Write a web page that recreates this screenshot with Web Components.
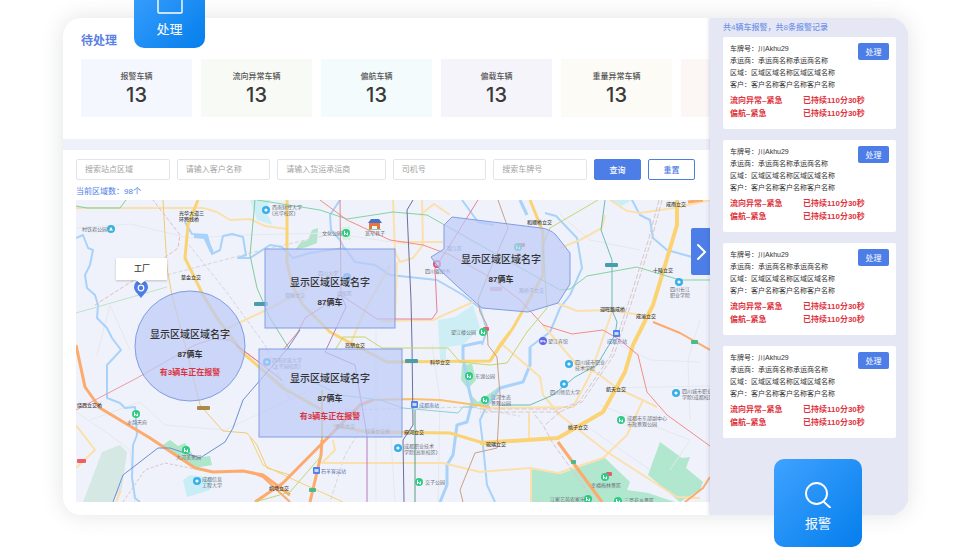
<!DOCTYPE html>
<html lang="zh-CN">
<head>
<meta charset="utf-8">
<title>待处理</title>
<style>
    body {
        margin: 0;
        background: #fff;
        color: #333;
        font-family: "Liberation Sans", "Noto Sans CJK SC", sans-serif;
        --blue: #4d7de6;
        --red: #dd3340;
    }
</style>
</head>
<body>
<dispatch-board>
    <tile-button slot="float" class="top" label="处理">
        <svg viewBox="0 0 26 26" width="26" height="26"><rect x="1" y="1" width="24" height="24" rx="1" fill="none" stroke="#fff" stroke-width="1.4"/></svg>
    </tile-button>
    <tile-button slot="float" class="bottom" label="报警">
        <svg viewBox="0 0 26 26" width="26" height="26"><g fill="none" stroke="#fff" stroke-width="1.9" stroke-linecap="round"><circle cx="11.500" cy="11.500" r="10.500"/><path d="M18.500 19.500L25 25.500"/></g></svg>
    </tile-button>

    <stat-row>
        <stat-card label="报警车辆" value="13" style="--bg: #f5f7fe"></stat-card>
        <stat-card label="流向异常车辆" value="13" style="--bg: #f8fbf5"></stat-card>
        <stat-card label="偏航车辆" value="13" style="--bg: #f3fbfc"></stat-card>
        <stat-card label="偏载车辆" value="13" style="--bg: #f5f4fb"></stat-card>
        <stat-card label="重量异常车辆" value="13" style="--bg: #fcfbf6"></stat-card>
        <stat-card label="" value="" style="--bg: #fcf7f5"></stat-card>
    </stat-row>
    <search-bar></search-bar>
    <region-map></region-map>

    <alarm-list slot="side">
        <alarm-card></alarm-card>
        <alarm-card></alarm-card>
        <alarm-card></alarm-card>
        <alarm-card></alarm-card>
    </alarm-list>
</dispatch-board>

<script>
class DispatchBoard extends HTMLElement {
    constructor() {
        super()

        const shadow = this.attachShadow({ mode: 'open' })

        shadow.innerHTML = `
        <style>
            :host {
                display: block;
                padding: 18px 69px 35px 63px;
                overflow: hidden;
            }

            .frame {
                position: relative;
            }

            .panel {
                display: flex;
                border-radius: 18px;
                background: #fff;
                box-shadow: 0 0 22px rgba(60, 70, 70, .15);
                overflow: hidden;
            }

            main {
                flex: 1;
                min-width: 0;
                padding-bottom: 13px;
            }

            aside {
                position: relative;
                flex: 0 0 198px;
                background: #e5e8f4;
                box-shadow: 0 0 4px rgba(60, 70, 130, .3);
            }

            ::slotted(.top),
            ::slotted(.bottom) {
                position: absolute;
            }

            ::slotted(.top) {
                --size: 71px;
                --pad: 8px;
                left: 71px;
                top: -41px;
            }

            ::slotted(.bottom) {
                --size: 88px;
                --pad: 13px;
                right: 46px;
                bottom: -32px;
            }
        </style>

        <div class="frame">
            <div class="panel">
                <main><slot></slot></main>
                <aside><slot name="side"></slot></aside>
            </div>
            <slot name="float"></slot>
        </div>
        `
    }
}

class TileButton extends HTMLElement {
    constructor() {
        super()

        const shadow = this.attachShadow({ mode: 'open' })

        shadow.innerHTML = `
        <style>
            :host {
                display: block;
            }

            button {
                display: flex;
                flex-direction: column;
                align-items: center;
                justify-content: flex-end;
                gap: 6px;
                width: var(--size);
                height: var(--size);
                box-sizing: border-box;
                padding: 0 0 var(--pad);
                border: 0;
                border-radius: 10px;
                background: linear-gradient(135deg, #3fa2ff, #047eec);
                color: #fff;
                font: 13px/20px "Liberation Sans", "Noto Sans CJK SC", sans-serif;
            }
        </style>

        <button type="button"><slot></slot><span>${this.getAttribute('label')}</span></button>
        `
    }
}

class StatRow extends HTMLElement {
    constructor() {
        super()

        const shadow = this.attachShadow({ mode: 'open' })

        shadow.innerHTML = `
        <style>
            :host {
                display: block;
                padding: 13px 0 22px 18px;
                border-bottom: 11px solid #eef1f9;
                overflow: hidden;
            }

            h1 {
                margin: 0 0 8px;
                font-size: 12px;
                line-height: 20px;
                font-weight: 700;
                color: #5b80e4;
            }

            .cards {
                display: flex;
                gap: 9px;
            }
        </style>

        <h1>待处理</h1>
        <div class="cards"><slot></slot></div>
        `
    }
}

class StatCard extends HTMLElement {
    constructor() {
        super()

        const shadow = this.attachShadow({ mode: 'open' })

        shadow.innerHTML = `
        <style>
            :host {
                display: block;
                flex: 0 0 111px;
                height: 58px;
                box-sizing: border-box;
                padding-top: 12px;
                background: var(--bg);
                text-align: center;
            }

            .label {
                font-size: 8px;
                line-height: 12px;
                font-weight: 500;
                color: #555;
            }

            .value {
                font: 500 20px/24px Inter, sans-serif;
                color: #3a3a3a;
            }
        </style>

        <div class="label">${this.getAttribute('label')}</div>
        <div class="value">${this.getAttribute('value')}</div>
        `
    }
}

class SearchBar extends HTMLElement {
    constructor() {
        super()

        const shadow = this.attachShadow({ mode: 'open' })
        const fields = ['搜索站点区域', '请输入客户名称', '请输入货运承运商', '司机号', '搜索车牌号']

        shadow.innerHTML = `
        <style>
            :host {
                display: block;
                padding: 9px 15px 2px 13px;
            }

            form {
                display: flex;
                gap: 7px;
            }

            input,
            button {
                height: 21px;
                box-sizing: border-box;
                border: 1px solid #e3e5ea;
                border-radius: 2px;
                background: #fff;
                font: 8px "Liberation Sans", "Noto Sans CJK SC", sans-serif;
            }

            input {
                flex: 93 1 0;
                min-width: 0;
                padding: 0 8px;
            }

            input.wide {
                flex-grow: 111;
            }

            input::placeholder {
                color: #a3a3a3;
            }

            button {
                flex: 0 0 47px;
                padding: 0;
                border-color: var(--blue);
                font-weight: 500;
                color: var(--blue);
            }

            button[type=submit] {
                background: var(--blue);
                color: #fff;
            }

            p {
                margin: 5px 0 0;
                font-size: 8px;
                line-height: 13px;
                color: var(--blue);
            }
        </style>

        <form>
            ${fields.map((f, i) => `<input type="text" placeholder="${f}" aria-label="${f}"${i == 2 ? ' class="wide"' : ''}>`).join('')}
            <button type="submit">查询</button>
            <button type="reset">重置</button>
        </form>
        <p>当前区域数：98个</p>
        `
    }
}

// [colour, width, points, dash]
const roads = [
    // side streets
    ['#e5e8ee', 1, '76,228 130,224 190,238 245,235 330,233 413,245'],
    ['#e5e8ee', 1, '97,355 110,305 130,350'],
    ['#e5e8ee', 1, '90,420 140,402 165,425 225,430 310,390'],
    ['#e5e8ee', 1, '340,437 390,425 395,502'],
    ['#e5e8ee', 1, '432,345 440,400 438,502'],
    ['#e5e8ee', 1, '376,330 376,502'],
    ['#e5e8ee', 1, '605,388 710,386'],
    ['#e5e8ee', 1, '585,425 650,470'],
    ['#e5e8ee', 1, '600,405 690,440 670,470'],
    ['#e5e8ee', 1, '700,320 688,360 690,420'],
    ['#e5e8ee', 1, '560,215 590,240 640,250'],
    ['#e5e8ee', 1, '620,345 650,360 700,362'],
    ['#e5e8ee', 1, '76,412 110,435 130,450 135,502'],
    ['#d6d6da', 1, '167,275 250,253 340,232', '4 2'],
    ['#d6d6da', 1, '185,240 225,290 265,345 290,400', '4 2'],
    ['#d6d6da', 1, '345,410 470,407 520,416', '4 2'],
    ['#d6d6da', 1, '360,430 345,455 330,502', '4 2'],
    // rivers
    ['#a9d2fb', 2, '76,238 83,235 88,248 93,250 90,265 85,275 87,288 95,295 98,305 97,318 107,328 112,338 121,350 107,365 107,398 120,403 125,408 135,407 137,435 133,445 132,478 135,498 140,502'],
    ['#a9d2fb', 2, '185,222 192,234 207,235 212,254 220,250 223,236 232,234 243,237 246,255 238,258 250,258 270,245 282,247 293,258 310,253 330,250 345,248 355,262 375,265 390,275 437,280 463,295 480,308 487,330 482,345'],
    ['#a9d2fb', 4, '194,236 205,237 212,252'],
    ['#a9d2fb', 3, '482,342 463,346 463,358 468,385 472,402 467,422 457,425 453,455 447,465 447,485 440,502'],
    ['#a9d2fb', 2, '340,200 330,215 331,230 340,240 345,250'],
    ['#a9d2fb', 2, '462,200 478,222 494,225'],
    ['#a9d2fb', 3, '520,200 527,215'],
    ['#a9d2fb', 2, '545,213 556,216 577,238 582,268 570,295 560,308 550,332 530,347'],
    ['#a9d2fb', 3, '530,347 530,365 523,382 500,388 487,405'],
    ['#a9d2fb', 2, '487,405 480,420 483,445 487,485 495,502'],
    ['#a9d2fb', 2, '632,200 640,215 650,220 653,238 667,250 692,257'],
    // minor roads
    ['#fbe0ab', 2, '76,208 203,208 217,212 230,220 250,219 265,226 287,229'],
    ['#fbe0ab', 2, '217,333 260,313 290,298 340,270'],
    ['#fbe0ab', 2, '393,200 395,252 400,262 413,258 423,245 422,200'],
    ['#fbe0ab', 2, '397,242 443,242'],
    ['#fbe0ab', 2, '420,215 434,204 450,215'],
    ['#fbe0ab', 2, '397,262 395,320'],
    ['#fbe0ab', 2, '350,345 365,310 390,265'],
    ['#fbe0ab', 2, '380,321 433,320 473,302'],
    ['#fbe0ab', 2, '610,200 627,211 640,213 680,207 710,200'],
    ['#fbe0ab', 2, '605,215 602,228 580,240 560,248'],
    ['#fbe0ab', 2, '557,303 577,311 610,310 653,317'],
    ['#fbe0ab', 2, '612,312 597,355 590,375 573,407 480,408'],
    ['#fbe0ab', 2, '503,345 540,377 543,395 560,415 607,452 677,497 700,498'],
    ['#fbe0ab', 2, '543,325 560,345 577,365 597,373 617,388 657,407'],
    ['#fbe0ab', 2, '643,400 627,435 603,458 558,473 530,468 480,472 443,463 322,463 335,450 333,440'],
    ['#fbe0ab', 2, '529,413 529,438'],
    ['#fbe0ab', 2, '531,468 531,502'],
    ['#fbe0ab', 2, '76,425 95,450 76,468'],
    ['#fbe0ab', 2, '121,490 116,502'],
    ['#f3cb70', 1, '163,200 167,268 172,295 185,345 200,405 223,431 247,433 257,445 267,468 290,475'],
    ['#fbd06e', 1, '250,437 263,465 290,478 343,502'],
    // highways
    ['#fbd372', 3, '198,200 188,225 185,258 203,295 217,318 243,353 283,388 322,410'],
    ['#fbd372', 3, '287,200 287,262 292,285 303,305 330,332 360,348 387,362 490,361 500,345 510,332'],
    ['#fbd372', 3, '530,200 543,232 543,275 513,328 490,361'],
    ['#fbd372', 4, '677,200 677,225 663,272 653,305 633,345 625,372 603,412 577,427 558,438 480,443'],
    ['#fbd372', 3, '333,425 367,432 450,433 490,445'],
    ['#fdaa6c', 3, '76,345 85,387 100,408 150,438 195,468 213,472 243,471 263,475 290,495'],
    ['#fdaa6c', 2, '250,472 263,477 290,502'],
    ['#fdaa6c', 3, '255,502 283,483 360,405 373,400'],
    ['#fbc06a', 2, '373,400 410,399 440,400 490,407'],
    ['#e0cb62', 2, '322,390 322,440'],
    ['#fdaa6c', 3, '322,440 321,455 310,502'],
    ['#fdaa6c', 2, '653,322 680,333 710,350'],
    ['#fdaa6c', 3, '558,442 577,468 602,502'],
    ['#fdaa6c', 2, '710,477 703,488 685,502'],
    ['#fdaa6c', 3, '688,202 703,200'],
    // metro lines
    ['#7fcf9c', 1, '76,206 87,208 120,208 126,200'],
    ['#bfe3c9', 1, '76,313 167,287'],
    ['#83c99a', 1, '255,200 250,255 257,288 270,318 290,350'],
    ['#83d3a2', 1, '257,200 320,210 347,219 393,212 427,215 480,245 560,290 570,289 587,276 637,267 680,280 710,280'],
    ['#f58d82', 1, '320,200 347,220 390,240 423,245 450,255 490,277 520,300 543,325 572,334 603,330 620,340 638,355 647,392 667,415 710,446'],
    ['#d98a8c', 1, '340,200 341,295'],
    ['#e77f9b', 1, '341,295 377,319 432,319 437,312 435,268 450,245 478,200'],
    ['#ec7a7c', 1, '341,295 305,318 298,332 283,350'],
    ['#b67cc0', 1, '341,295 346,307 325,352 355,365 363,412 367,435 367,502'],
    ['#6b6f9e', 1, '413,200 407,210 411,300 412,345 413,425 403,440 404,502'],
    ['#5c9a83', 1, '415,410 415,502'],
    ['#c6d66b', 1, '335,350 343,337 365,337 382,348 448,348 460,362 490,365 507,363 527,332 547,308 543,245 550,228 598,200'],
    ['#c6d66b', 1, '255,502 290,492 322,455'],
    ['#69bdb4', 1, '605,200 601,230 612,260 612,310 617,322 615,335 597,365 575,377 553,395 530,405 500,405'],
    ['#8cd0d6', 1, '477,407 463,407 458,413 403,408 380,400 340,395 300,375'],
    ['#c9a184', 1, '498,200 508,228 490,270 478,300 480,312 487,325 488,345 497,357 500,395 497,448 475,453 460,490 463,502'],
    ['#ee9aa0', 1, '76,410 137,378 195,345 213,339 230,340 260,363'],
    ['#f0776c', 1, '236,345 260,363 282,380'],
    ['#6f8ed6', 1, '113,502 123,475 158,448 170,448 200,458 225,442 233,428 243,400 288,348 300,330'],
    // railways
    ['#e3bcc0', 1, '95,305 137,278 178,248 180,235 153,200', '4 2'],
    ['#d9c6c8', 1, '659,200 649,238 632,292 611,355 579,402 560,409 480,409', '5 2'],
    ['#d9c6c8', 1, '662,200 652,238 635,292 614,355 582,402 560,412 480,412', '5 2'],
    ['#d9c6c8', 1, '535,415 543,425 552,442 595,502', '5 2'],
    ['#d9c6c8', 1, '560,412 545,425', '5 2'],
    ['#d9c6c8', 1, '123,502 145,470 165,463 200,470', '3 2']
]

const areas = [
    ['#d5e8e4', '83,502 102,452 120,445 127,452 122,488 112,502'],
    ['#ade6c8', '163,445 170,440 178,446 185,443 195,458 210,456 212,465 195,468'],
    ['#c8edf6', '183,480 190,475 213,478 210,490 187,497'],
    ['#b1e7cf', '532,469 560,474 605,458 630,482 627,490 648,493 675,502 532,502'],
    ['#b1e7cf', '660,442 682,458 690,457 686,468 703,482 700,490 680,502 648,475'],
    ['#b2e5cb', '295,250 301,242 308,240 312,230 318,228 317,243 307,247'],
    ['#cdeef5', '438,320 455,317 473,305 480,328 463,345 446,347 446,360 440,360'],
    ['#cdeef5', '250,200 270,200 266,212 273,225 257,220'],
    ['#cdeef5', '610,200 632,200 622,206'],
    ['#ade6c8', '462,365 472,364 476,380 468,389 461,380'],
    ['#ade6c8', '468,392 478,402 500,386 496,398 488,406 473,406'],
    ['#d8f0de', '340,228 350,226 351,240 343,240']
]

// [kind, x, y, label x, label y, ...label lines]
const pois = [
    ['school', 266, 210, 272, 209, '西南财经大学', '(光华校区)'],
    ['park', 346, 233, 322, 235, '文化公园'],
    ['sky', 111, 229, 82, 231, '村铁君公园'],
    ['none', 0, 0, 179, 215, '光华大道三', '环跨线桥'],
    ['none', 0, 0, 181, 279, '草金立交'],
    ['plain', 0, 0, 365, 235, '宽窄巷子'],
    ['plain', 0, 0, 285, 297, '双楠立交'],
    ['plain', 0, 0, 337, 295, '武侯区'],
    ['school', 347, 277, 318, 275, '四川大学'],
    ['plain', 0, 0, 447, 250, '锦江区'],
    ['ring', 437, 264, 425, 273, '四川省图书'],
    ['park', 518, 247, 0, 0],
    ['plain', 0, 0, 519, 292, '观桥子立交'],
    ['none', 0, 0, 527, 224, '和顺桥立交'],
    ['none', 0, 0, 666, 206, '成南立交'],
    ['none', 0, 0, 653, 272, '十陵立交'],
    ['school', 679, 282, 670, 291, '四川长江', '职业学院'],
    ['none', 0, 0, 600, 311, '迎晖路成桥'],
    ['none', 0, 0, 636, 318, '成渝立交'],
    ['metro', 616, 334, 607, 343, '成都东站'],
    ['hotel', 543, 341, 548, 343, '望江宾馆'],
    ['park', 483, 332, 451, 334, '望江楼公园'],
    ['none', 0, 0, 345, 347, '高朋立交'],
    ['none', 0, 0, 430, 364, '科华立交'],
    ['park', 469, 376, 475, 378, '东湖公园'],
    ['park', 485, 400, 491, 399, '江河生态', '景观公园'],
    ['metro', 414, 405, 419, 407, '成都南站'],
    ['school', 267, 362, 272, 362, '西南民族大学', '(太平园校区)'],
    ['plain', 0, 0, 335, 428, '金花立交'],
    ['plain', 0, 0, 365, 433, '桂溪立交桥'],
    ['none', 0, 0, 404, 434, '府河立交'],
    ['school', 398, 448, 404, 448, '成都职业技术', '学院(高新校区)'],
    ['park', 419, 482, 425, 484, '交子公园'],
    ['metro', 316, 471, 321, 473, '石羊客运站'],
    ['none', 0, 0, 269, 490, '机场立交'],
    ['none', 0, 0, 77, 407, '绕西立交桥'],
    ['park', 136, 414, 127, 424, '水韵天府'],
    ['park', 186, 450, 176, 459, '大河美景园'],
    ['school', 197, 481, 202, 481, '成都信息', '工程大学'],
    ['school', 569, 364, 575, 364, '四川城市职业', '技术学院'],
    ['school', 564, 384, 550, 394, '四川师范大学'],
    ['none', 0, 0, 606, 391, '航天立交'],
    ['school', 676, 393, 682, 393, '四川城市职业', '学院(成都校区)'],
    ['park', 621, 420, 627, 420, '成都市东部副中心', '市政景观公园'],
    ['none', 0, 0, 568, 429, '桃子立交'],
    ['none', 0, 0, 486, 446, '琉璃立交'],
    ['park', 605, 477, 591, 487, '幸福梅林景区'],
    ['park', 588, 499, 550, 501, '江家艺苑农家乐'],
    ['park', 618, 501, 624, 502, '三圣花乡景区']
]

const pinColors = { school: '#35aeea', park: '#2fcb85', sky: '#3bb3dc', hotel: '#6268e6', ring: '#df5475' }
const glyphs = {
    school: '<circle r="1.600" fill="#fff"/>',
    park: '<path d="M-1.500 2V-2M-1.500 0L1.500 2V-.5" stroke="#fff" fill="none"/>',
    sky: '<path d="M-2 1.500L0-2L2 1.500z" fill="#fff"/>',
    metro: '<path d="M-1.500-2h4v3h-4z" fill="#c9dafb"/>',
    hotel: '<path d="M-2 1.500V-1M-2 0H2V1.500" stroke="#fff" fill="none"/>',
    ring: '<circle r="2" fill="#e9ddf0"/>'
}

// [colour, x, y, width]
const shields = [
    ['#4a9dac', 254, 302, 14], ['#4a9dac', 605, 263, 13], ['#4a9dac', 405, 359, 13], ['#a98a4b', 197, 406, 13],
    ['#f05f63', 77, 459, 9], ['#4bb98c', 309, 488, 7], ['#4bb98c', 571, 460, 5], ['#4bb98c', 691, 340, 7],
    ['#ec5a64', 483, 327, 6], ['#ec5a64', 606, 472, 6], ['#ec5a64', 519, 243, 6], ['#e8a9b4', 490, 287, 12]
]

// [shape, centre x, title baseline, alarm text]
const zones = [
    ['<circle cx="190" cy="346" r="55"/>', 190, 338, '有3辆车正在报警'],
    ['<rect x="265" y="249" width="130" height="79"/>', 330, 286, ''],
    ['<rect x="259" y="349" width="143" height="88"/>', 330, 382, '有3辆车正在报警'],
    ['<path d="M452 217L444 225V249L431 257L441 271L457 286L482 308L528 312L558 303L570 284V253L556 235Q550 229 541 228z"/>', 501, 263, '']
]

class RegionMap extends HTMLElement {
    constructor() {
        super()

        const shadow = this.attachShadow({ mode: 'open' })

        const poi = ([kind, x, y, lx, ly, ...lines]) => {
            const pin = x == 0 ? '' : `
                <g transform="translate(${x} ${y})">
                    ${kind == 'metro' ? '<rect x="-3" y="-4" width="7" height="7" rx="1" fill="#4d80ee"/>' : `<circle r="4" fill="${pinColors[kind]}"/>`}
                    ${glyphs[kind]}
                </g>`
            return pin + lines.map((t, i) => `<text class="poi ${kind}" x="${lx}" y="${ly + i * 6}">${t}</text>`).join('')
        }

        const zone = ([shape, x, y, alarm]) => `
            <g class="zone">${shape}</g>
            <text class="name" x="${x}" y="${y}">显示区域区域名字</text>
            <text class="count" x="${x}" y="${y + 19}">87俩车</text>
            ${alarm ? `<text class="alarm" x="${x}" y="${y + 37}">${alarm}</text>` : ''}`

        shadow.innerHTML = `
        <style>
            :host {
                display: block;
                position: relative;
                margin-left: 13px;
            }

            svg {
                display: block;
                width: 100%;
            }

            .poi {
                font-size: 5px;
                fill: #6a6f7a;
            }

            .poi.none {
                font-weight: 500;
                fill: #444;
            }

            .poi.metro {
                fill: #5674ad;
            }

            .zone {
                fill: #bccbf6;
                fill-opacity: .72;
                stroke: #819de4;
            }

            .name,
            .count,
            .alarm {
                text-anchor: middle;
                font-size: 10px;
                font-weight: 500;
                fill: #333;
            }

            .count,
            .alarm {
                font-size: 8px;
                font-weight: 700;
            }

            .alarm {
                fill: var(--red);
            }

            .place {
                text-anchor: middle;
                font-size: 8px;
                font-weight: 500;
                fill: #333;
            }

            button {
                position: absolute;
                right: 0;
                top: 28px;
                width: 19px;
                height: 47px;
                padding: 0;
                border: 0;
                border-radius: 2px 0 0 2px;
                background: var(--blue);
            }

            button svg {
                width: 19px;
                height: 20px;
            }
        </style>

        <svg viewBox="76 200 634 302">
            <rect x="76" y="200" width="634" height="302" fill="#eff2fa"/>
            ${areas.map(([c, p]) => `<polygon points="${p}" fill="${c}"/>`).join('')}
            <g fill="none" stroke-linejoin="round">
                ${roads.map(([c, w, p, dash]) => `<polyline points="${p}" stroke="${c}" stroke-width="${w}"${dash ? ` stroke-dasharray="${dash}"` : ''}/>`).join('')}
            </g>
            ${shields.map(([c, x, y, w]) => `<rect x="${x}" y="${y}" width="${w}" height="4" rx="1" fill="${c}"/>`).join('')}
            <path d="M368 229h13v1h-13z" fill="#8fcf9f"/>
            <path d="M369 223h11v6h-3v-3h-5v3h-3z" fill="#e8743a"/>
            <path d="M371 219h8l3 4h-14z" fill="#4771c8"/>
            ${pois.map(poi).join('')}
            ${zones.map(zone).join('')}
            <path d="M141 298C138 294 134 291 134 287A7 7 0 0 1 148 287C148 291 144 294 141 298z" fill="var(--blue)"/>
            <circle cx="141" cy="288" r="2.800" fill="none" stroke="#fff" stroke-width="1.200"/>
            <path d="M116 258h51v22h-21l-5 4l-5-4h-20z" fill="#fff" style="filter: drop-shadow(0 1px 1px #0003)"/>
            <text class="place" x="142" y="271">工厂</text>
        </svg>
        <button type="button" aria-label="展开">
            <svg viewBox="0 0 19 20"><path d="M7 3L14 10L7 17" fill="none" stroke="#fff" stroke-width="2" stroke-linecap="round"/></svg>
        </button>
        `
    }
}

class AlarmList extends HTMLElement {
    constructor() {
        super()

        const shadow = this.attachShadow({ mode: 'open' })

        shadow.innerHTML = `
        <style>
            :host {
                display: flex;
                flex-direction: column;
                gap: 11px;
                padding: 3px 12px 0 13px;
            }

            h2 {
                margin: 0 0 -9px;
                font-size: 8px;
                line-height: 14px;
                font-weight: 500;
                color: #7394e8;
            }
        </style>

        <h2>共4辆车报警，共8条报警记录</h2>
        <slot></slot>
        `
    }
}

class AlarmCard extends HTMLElement {
    constructor() {
        super()

        const shadow = this.attachShadow({ mode: 'open' })

        shadow.innerHTML = `
        <style>
            :host {
                display: block;
                padding: 6px 7px 9px;
                border-radius: 2px;
                background: #fff;
                font-size: 7px;
                line-height: 12px;
            }

            .top {
                display: flex;
                justify-content: space-between;
                align-items: flex-start;
                height: 51px;
            }

            button {
                width: 31px;
                height: 17px;
                padding: 0;
                border: 0;
                border-radius: 2px;
                background: var(--blue);
                color: #fff;
                font: 8px "Liberation Sans", "Noto Sans CJK SC", sans-serif;
            }

            .alarm {
                display: grid;
                grid-template-columns: 73px 1fr;
                font-size: 8px;
                line-height: 13px;
                font-weight: 700;
                color: var(--red);
            }
        </style>

        <div class="top">
            <div>
                <div>车牌号：川Akhu29</div>
                <div>承运商：承运商名称承运商名称</div>
                <div>区域：区域区域名称区域区域名称</div>
                <div>客户：客户名称客户名称客户名称</div>
            </div>
            <button type="button">处理</button>
        </div>
        <div class="alarm">
            <span>流向异常–紧急</span><span>已持续110分30秒</span>
            <span>偏航–紧急</span><span>已持续110分30秒</span>
        </div>
        `
    }
}

customElements.define("dispatch-board", DispatchBoard)
customElements.define("tile-button", TileButton)
customElements.define("stat-row", StatRow)
customElements.define("stat-card", StatCard)
customElements.define("search-bar", SearchBar)
customElements.define("region-map", RegionMap)
customElements.define("alarm-list", AlarmList)
customElements.define("alarm-card", AlarmCard)
</script>
</body>
</html>
